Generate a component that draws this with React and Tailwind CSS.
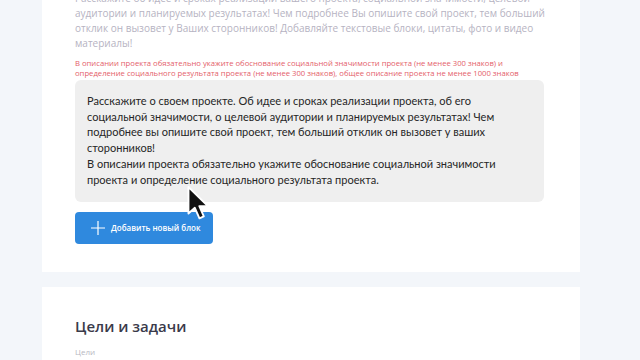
import React from "react"

const SANS = { fontFamily: '"Open Sans", "Noto Sans", sans-serif' }
const BODY = { fontFamily: 'Lato, "Open Sans", sans-serif' }

function Cursor() {
  return (
    <svg
      className="absolute left-[186px] top-[185px]"
      width="28"
      height="38"
      viewBox="0 0 20 28"
    >
      <path
        d="M1.5 1.5 L1.5 21 L6.2 16.8 L9.6 24.6 L12.8 23.2 L9.5 15.6 L15.8 15.6 Z"
        fill="#111"
        stroke="#fff"
        strokeWidth="1.4"
        strokeLinejoin="round"
      />
    </svg>
  )
}

export default function App() {
  return (
    <div className="relative h-[360px] w-[640px] overflow-hidden bg-[#f3f6fa]" style={SANS}>
      <div className="ml-[42px] w-[538px]">
        {/* Описание проекта */}
        <div className="bg-white pl-[33px] pr-[35px] pb-[28px]">
          <p className="-mt-[9px] text-[10px] leading-[15px] text-[#b6b3c2]">
            Расскажите об идее и сроках реализации вашего проекта, социальной значимости, целевой
            аудитории и планируемых результатах! Чем подробнее Вы опишите свой проект, тем больший
            отклик он вызовет у Ваших сторонников! Добавляйте текстовые блоки, цитаты, фото и видео
            материалы!
          </p>
          <p className="mt-[7px] text-[7.7px] leading-[10px] text-[#e4606a]">
            В описании проекта обязательно укажите обоснование социальной значимости проекта (не менее 300 знаков) и
            <br />
            определение социального результата проекта (не менее 300 знаков), общее описание проекта не менее 1000 знаков
          </p>

          <div
            className="mt-[2px] h-[122px] w-[469px] rounded-md bg-[#efefef] px-[12px] pt-[13px] text-[11px] leading-[15.7px] text-[#262626]"
            style={BODY}
          >
            <p>
              Расскажите о своем проекте. Об идее и сроках реализации проекта, об его
              <br />
              социальной значимости, о целевой аудитории и планируемых результатах! Чем
              <br />
              подробнее вы опишите свой проект, тем больший отклик он вызовет у ваших
              <br />
              сторонников!
            </p>
            <p>
              В описании проекта обязательно укажите обоснование социальной значимости
              <br />
              проекта и определение социального результата проекта.
            </p>
          </div>

          <button className="mt-[10px] flex h-[32px] w-[138px] items-center gap-[5px] rounded-[4px] bg-[#2f89de] pl-[15px] text-[8px] font-semibold text-white">
            <svg width="16" height="16" viewBox="0 0 16 16">
              <path d="M8 1 V15 M1 8 H15" stroke="#fff" strokeWidth="1.2" />
            </svg>
            Добавить новый блок
          </button>
        </div>

        {/* Цели и задачи */}
        <div className="mt-[15px] bg-white pl-[33px] pt-[29px] pb-[20px]">
          <h2 className="text-[15px] font-semibold leading-[20px] text-[#3a3a4a]">Цели и задачи</h2>
          <p className="mt-[11px] text-[8px] leading-[10px] text-[#b8b8c2]">Цели</p>
        </div>
      </div>
      <Cursor />
    </div>
  )
}
